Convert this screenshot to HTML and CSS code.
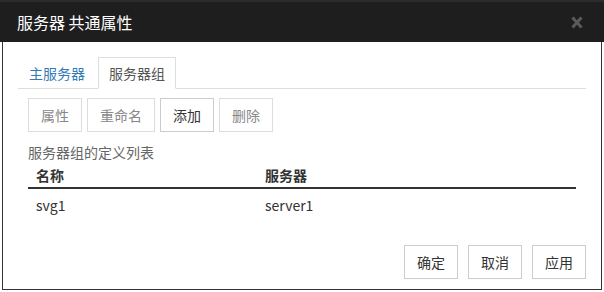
FILE: index.html
```html
<!DOCTYPE html>
<html>
<head>
    <title>服务器 共通属性</title>
    <meta http-equiv="Content-Type" content="text/html;charset=utf-8"/>
    <link rel="stylesheet" href="styles.css">
</head>
<body>
<div class="dialog">
    <div class="dialog-header">
        <span class="dialog-title">服务器 共通属性</span>
        <span class="dialog-close">
            <svg width="12" height="13" viewBox="0 0 12 13">
                <path d="M1.5 1.5 L10.5 11.5 M10.5 1.5 L1.5 11.5" stroke="#5a5a5a" stroke-width="3" fill="none"/>
            </svg>
        </span>
    </div>
    <div class="dialog-body">
        <ul class="tabs">
            <li class="tab">主服务器</li>
            <li class="tab active">服务器组</li>
        </ul>
        <div class="tab-panel">
            <div class="toolbar">
                <button class="btn disabled">属性</button>
                <button class="btn disabled">重命名</button>
                <button class="btn">添加</button>
                <button class="btn disabled">删除</button>
            </div>
            <div class="list-label">服务器组的定义列表</div>
            <table class="list">
                <thead>
                    <tr><th class="col-name">名称</th><th>服务器</th></tr>
                </thead>
                <tbody>
                    <tr><td class="col-name">svg1</td><td>server1</td></tr>
                </tbody>
            </table>
        </div>
        <div class="dialog-footer">
            <button class="btn">确定</button>
            <button class="btn">取消</button>
            <button class="btn">应用</button>
        </div>
    </div>
</div>
</body>
</html>
```

FILE: styles.css
```css
body {
    margin: 0;
    background-color: #fff;
    font-family: "Noto Sans CJK SC", "Noto Sans", sans-serif;
    font-size: 14px;
    line-height: 20px;
    color: #333;
}
.dialog {
    width: 604px;
    height: 290px;
    display: flex;
    flex-direction: column;
}
.dialog-header {
    height: 42px;
    box-sizing: border-box;
    border-top: 2px solid #2c2c2c;
    background-color: #1e1e1e;
    display: flex;
    align-items: center;
    justify-content: space-between;
    padding: 0 21px 0 17px;
}
.dialog-title {
    color: #fff;
    font-size: 16px;
}
.dialog-close {
    display: flex;
    margin-top: 1px;
}
.dialog-body {
    flex: 1;
    margin: 0 2px;
    border: 1px solid #333;
    border-top: none;
    padding: 15px 15px 10px 15px;
    display: flex;
    flex-direction: column;
}
.tabs {
    list-style: none;
    margin: 0;
    padding: 0;
    display: flex;
    border-bottom: 1px solid #ddd;
}
.tab {
    padding: 5px 10px;
    margin-right: 2px;
    margin-bottom: -1px;
    border: 1px solid transparent;
    color: #337ab7;
}
.tab.active {
    color: #555;
    border-color: #ddd;
    border-bottom-color: #fff;
}
.tab-panel {
    padding: 9px 10px 0 10px;
}
.toolbar {
    display: flex;
    gap: 5px;
}
.btn {
    font-family: inherit;
    font-size: 14px;
    line-height: 20px;
    padding: 6px 12px;
    background-color: #fff;
    border: 1px solid #ccc;
    color: #333;
    border-radius: 0;
}
.btn.disabled {
    border-color: #ddd;
    color: #888;
}
.list-label {
    margin-top: 10px;
    color: #666;
}
.list {
    width: 100%;
    border-collapse: collapse;
    margin-top: 1px;
}
.list th {
    text-align: left;
    font-weight: bold;
    padding: 2px 8px;
    border-bottom: 2px solid #333;
}
.list td {
    padding: 6px 8px;
}
.list .col-name {
    width: 213px;
}
.dialog-footer {
    margin-top: auto;
    display: flex;
    justify-content: flex-end;
    gap: 10px;
}
```
